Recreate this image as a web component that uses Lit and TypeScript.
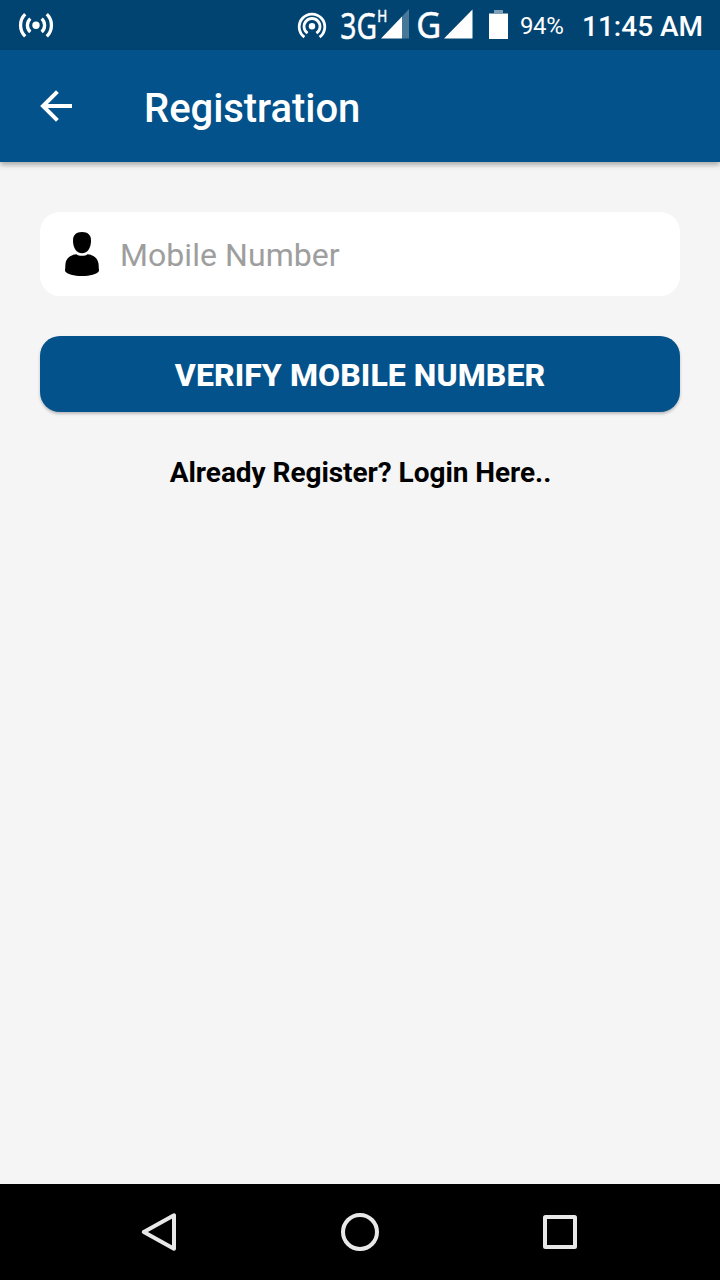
import { LitElement, html, css } from "lit";
import { customElement } from "lit/decorators.js";

@customElement("status-bar")
class StatusBar extends LitElement {
  static styles = css`
    :host {
      display: flex;
      align-items: center;
      height: 50px;
      box-sizing: border-box;
      background: #014472;
      color: #fff;
      font-family: Roboto, sans-serif;
      white-space: nowrap;
    }
    svg { display: block; flex: none; }
    .spacer { flex: 1; }
    .net { font-family: "Noto Sans", sans-serif; fill: #fff; stroke: #fff; stroke-width: 0.5; }
    .battery { width: 43px; margin-left: 12px; font-size: 24px; line-height: 50px; padding-top: 2px; letter-spacing: -0.4px; }
    .clock { width: 120px; margin: 0 18px 0 19px; font-size: 28px; font-weight: 500; line-height: 50px; padding-top: 3px; }
  `;
  render() {
    return html`
      <svg width="72" height="50" viewBox="0 0 72 50" fill="none" stroke="#fff" stroke-width="3.3">
        <circle cx="36" cy="25.3" r="3.7" fill="#fff" stroke="none" />
        <path d="M30.3 18.6a9.2 9.2 0 0 0 0 13.4M41.7 18.6a9.2 9.2 0 0 1 0 13.4" />
        <path d="M25.2 14.2a15.6 15.6 0 0 0 0 22.2M46.8 14.2a15.6 15.6 0 0 1 0 22.2" />
      </svg>
      <span class="spacer"></span>
      <svg width="218" height="50" viewBox="290 0 218 50">
        <g fill="none" stroke="#fff" stroke-width="2.8">
          <circle cx="312" cy="26.3" r="3.2" fill="#fff" stroke="none" />
          <path d="M307.6 33.2a8 8 0 1 1 8.8 0" />
          <path d="M304.4 37.2a12.8 12.8 0 1 1 15.2 0" />
        </g>
        <text class="net" x="340.2" y="39" font-size="37" textLength="36.8" lengthAdjust="spacingAndGlyphs">3G</text>
        <text class="net" x="377.2" y="22.3" font-size="16.5" textLength="10" lengthAdjust="spacingAndGlyphs">H</text>
        <path d="M409 9v29.5h-7V16.4z" fill="#477898" />
        <path d="M402 16.4v22.1h-21z" fill="#fff" />
        <text class="net" x="416.2" y="38.2" font-size="36.5" textLength="25" lengthAdjust="spacingAndGlyphs">G</text>
        <path d="M472.5 9.5v29H444z" fill="#fff" />
        <path d="M494 10h9v3h5v2h-19v-2h5z" fill="#7f9fb6" />
        <path d="M489 14h19v25h-19z" fill="#fff" />
      </svg>
      <span class="battery">94%</span>
      <span class="clock">11:45 AM</span>
    `;
  }
}

@customElement("nav-bar")
class NavBar extends LitElement {
  static styles = css`
    :host {
      display: flex;
      justify-content: center;
      align-items: center;
      gap: 140px;
      height: 96px;
      background: #000;
    }
    svg { display: block; width: 60px; height: 60px; fill: none; stroke: #e8e8e8; stroke-width: 4; stroke-linejoin: round; }
  `;
  render() {
    return html`
      <svg viewBox="0 0 60 60"><path d="M13.8 30 44 13.3v33.4z" /></svg>
      <svg viewBox="0 0 60 60"><circle cx="30" cy="30" r="17" /></svg>
      <svg viewBox="0 0 60 60"><rect x="15" y="15" width="30" height="30" rx="0.5" /></svg>
    `;
  }
}

@customElement("app-root")
class AppRoot extends LitElement {
  static styles = css`
    :host {
      display: flex;
      flex-direction: column;
      width: 720px;
      height: 1280px;
      background: #f5f5f5;
      font-family: Roboto, sans-serif;
    }
    svg { display: block; flex: none; }
    .appbar {
      display: flex;
      align-items: center;
      height: 112px;
      box-sizing: border-box;
      padding-left: 40px;
      background: #03528b;
      color: #fff;
      box-shadow: 0 3px 5px rgba(0, 0, 0, 0.3);
    }
    .title { margin: 0 0 0 72px; padding-top: 6px; font-size: 40px; line-height: 48px; font-weight: 500; letter-spacing: -0.05px; }
    .content { flex: 1; display: flex; flex-direction: column; padding: 50px 40px 0; }
    .field {
      display: flex;
      align-items: center;
      height: 84px;
      border-radius: 20px;
      background: #fff;
      padding-left: 24px;
      gap: 20px;
    }
    .input {
      flex: 1;
      min-width: 0;
      border: 0;
      outline: 0;
      padding: 2px 0 0;
      background: transparent;
      font: 400 32px/40px Roboto, sans-serif;
      letter-spacing: 0.06px;
      color: #222;
    }
    .input::placeholder { color: #9e9e9e; opacity: 1; }
    .verify {
      height: 76px;
      margin-top: 40px;
      padding: 2px 0 0;
      border: 0;
      border-radius: 20px;
      background: #03528b;
      color: #fff;
      font: 800 32px/40px Roboto, sans-serif;
      letter-spacing: 0.07px;
      box-shadow: 0 2px 3px rgba(0, 0, 0, 0.24);
    }
    .login { margin-top: 44px; padding-left: 1px; text-align: center; font-size: 28px; line-height: 34px; font-weight: 700; letter-spacing: -0.05px; color: #000; }
  `;
  render() {
    return html`
      <status-bar></status-bar>
      <header class="appbar">
        <svg width="32" height="32" viewBox="0 0 32 32" fill="none" stroke="#fff" stroke-width="4">
          <path d="M32 16H4M17.4 1.6 3 16l14.4 14.4" />
        </svg>
        <h1 class="title">Registration</h1>
      </header>
      <main class="content">
        <label class="field">
          <svg width="36" height="44" viewBox="0 0 36 44">
            <path d="M18 0c6 0 9 3 9 8.5C27 16 23.5 21.3 18 21.3S9 16 9 8.5C9 3 12 0 18 0z" />
            <path d="M12.5 22.2C14.5 24.3 21.5 24.3 23.5 22.2 29.5 22.7 33.5 26 34.5 31.5L35 39C33 42.5 26 44 18 44S3 42.5 1 39L1.5 31.5C2.5 26 6.5 22.7 12.5 22.2z" />
          </svg>
          <input class="input" type="tel" placeholder="Mobile Number" />
        </label>
        <button class="verify">VERIFY MOBILE NUMBER</button>
        <div class="login">Already Register? Login Here..</div>
      </main>
      <nav-bar></nav-bar>
    `;
  }
}
